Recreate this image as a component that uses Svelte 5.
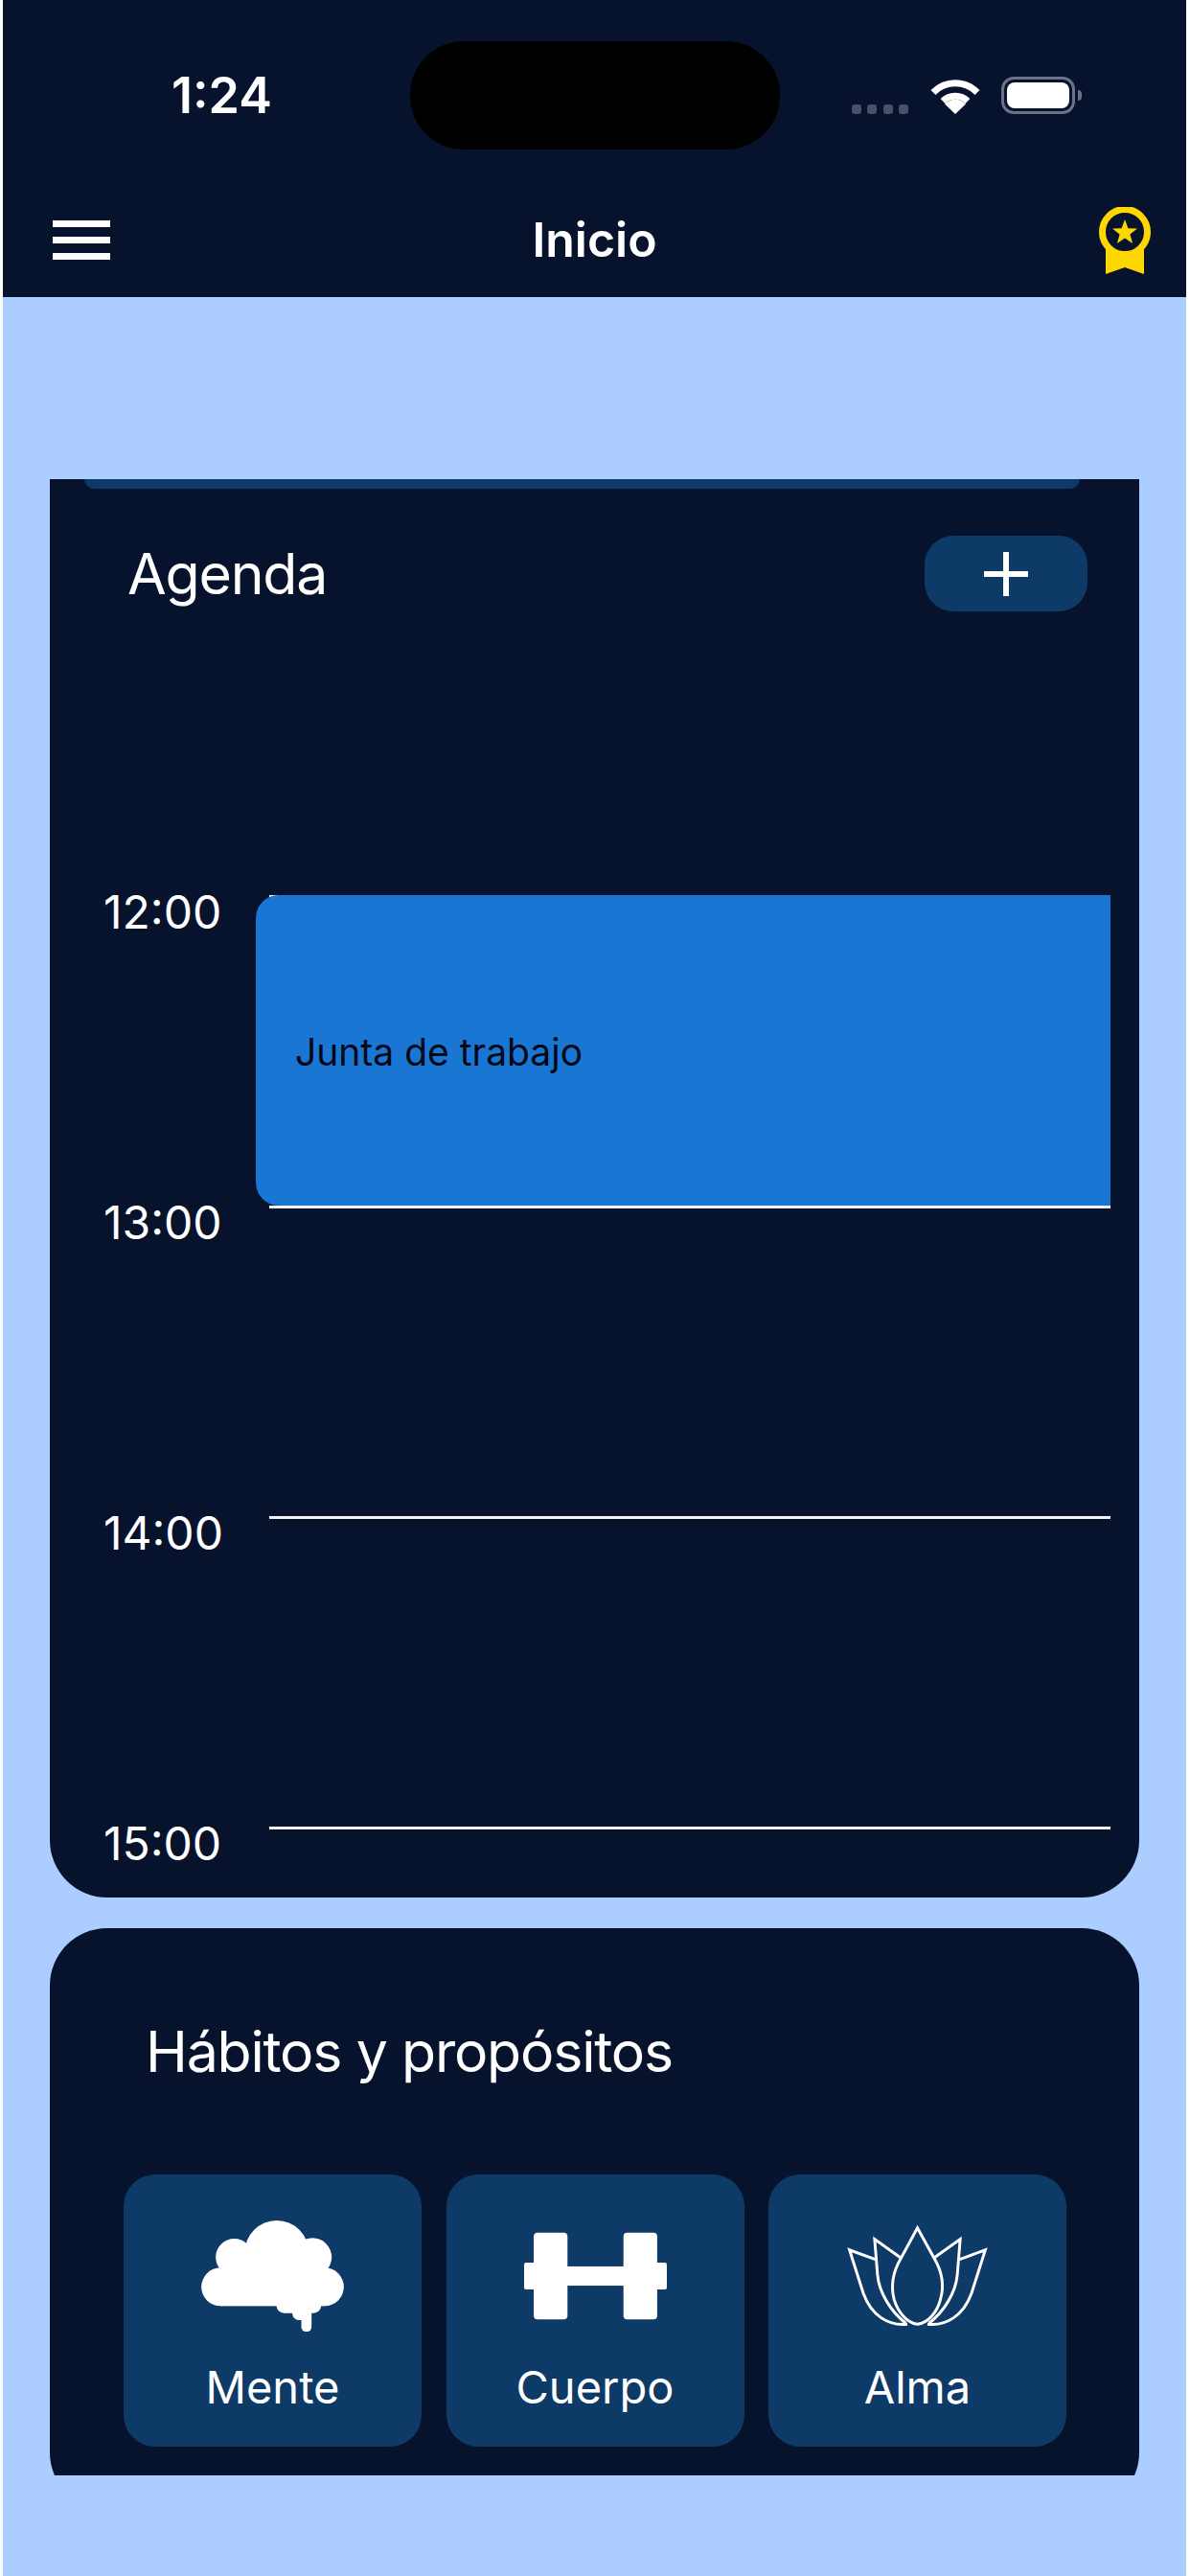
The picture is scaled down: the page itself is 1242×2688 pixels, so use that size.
<script>
  const hours = ["12:00", "13:00", "14:00", "15:00"];
  const habits = ["Mente", "Cuerpo", "Alma"];
</script>

<div class="screen">
  <header class="top">
    <div class="status">
      <span class="clock">1:24</span>
      <div class="island"></div>
      <div class="status-icons">
        <div class="dots"><i></i><i></i><i></i><i></i></div>
        <svg class="wifi" viewBox="0 0 52 39" aria-hidden="true">
          <path d="M3 16.5a32 32 0 0 1 46 0" />
          <path d="M13 25.5a19 19 0 0 1 26 0" />
          <path class="solid" d="M26 39l-11-10.5a15 15 0 0 1 22 0z" />
        </svg>
        <div class="battery"><div class="charge"></div></div>
      </div>
    </div>
    <div class="nav">
      <div class="burger"><i></i><i></i><i></i></div>
      <h1>Inicio</h1>
      <svg class="medal" viewBox="0 0 54 70" aria-hidden="true">
        <path d="M7 40v30l20-7 20 7V40z" />
        <circle cx="27" cy="26" r="23.5" />
        <path class="star" d="M27 13l3.4 9.3 9.6.2-7.6 6 2.7 9.5-8.1-5.6-8.1 5.6 2.7-9.5-7.6-6 9.6-.2z" />
      </svg>
    </div>
  </header>

  <main class="scroller">
    <div class="prev-card"></div>

    <section class="card agenda">
      <div class="agenda-head">
        <h2>Agenda</h2>
        <button type="button" class="add" aria-label="Agregar">
          <svg viewBox="0 0 46 46" aria-hidden="true"><path d="M23 0v46M0 23h46" /></svg>
        </button>
      </div>

      <div class="timeline">
        {#each hours as hour}
          <div class="hour">
            <span class="time">{hour}</span>
            <div class="line"></div>
          </div>
        {/each}
        <div class="event">Junta de trabajo</div>
      </div>
    </section>

    <section class="card habits">
      <h2>Hábitos y propósitos</h2>
      <div class="tiles">
        {#each habits as habit}
          <div class="tile">
            {#if habit === "Mente"}
              <svg class="icon" viewBox="0 0 446 348" aria-hidden="true">
                <g fill="#fff">
                  <circle cx="236" cy="100" r="100" />
                  <circle cx="103" cy="115" r="58" />
                  <circle cx="348" cy="115" r="60" />
                  <circle cx="60" cy="208" r="60" />
                  <circle cx="386" cy="208" r="60" />
                  <rect x="60" y="110" width="326" height="158" />
                  <rect x="235" y="230" width="140" height="60" rx="24" />
                  <rect x="285" y="260" width="60" height="52" rx="20" />
                  <rect x="313" y="280" width="32" height="68" rx="14" />
                </g>
              </svg>
            {:else if habit === "Cuerpo"}
              <svg class="icon" viewBox="0 0 148 90" aria-hidden="true">
                <g fill="#fff">
                  <rect x="0" y="31" width="14" height="28" rx="2" />
                  <rect x="10" y="0" width="35" height="90" rx="4" />
                  <rect x="40" y="35" width="68" height="20" />
                  <rect x="103" y="0" width="35" height="90" rx="4" />
                  <rect x="134" y="31" width="14" height="28" rx="2" />
                </g>
              </svg>
            {:else}
              <svg class="icon lotus" viewBox="305 212 454 326" aria-hidden="true">
                <path d="M532 222L585 318C610 360 620 400 605 450C595 490 565 525 532 528C500 525 470 490 458 450C445 400 455 360 480 318Z" />
                <path d="M480 318L396 258L405 370C410 430 450 490 495 525" />
                <path d="M584 318L668 258L659 370C654 430 614 490 569 525" />
                <path d="M398 322L316 292L360 430C385 500 440 535 500 528" />
                <path d="M666 322L748 292L704 430C679 500 624 535 564 528" />
              </svg>
            {/if}
            <span class="label">{habit}</span>
          </div>
        {/each}
      </div>
    </section>
  </main>
</div>

<style>
  :global(body) {
    background: #fff;
  }

  .screen {
    width: 1235px;
    height: 2688px;
    margin-left: 3px;
    background: #abcdff;
    overflow: hidden;
    font-family: Inter, "Noto Sans", sans-serif;
    color: #fff;
  }

  .top {
    height: 310px;
    box-sizing: border-box;
    background: #07122c;
  }

  .status {
    display: flex;
    height: 156px;
    box-sizing: border-box;
    padding-top: 43px;
  }

  .clock {
    width: 425px;
    box-sizing: border-box;
    padding: 32px 0 0 176px;
    font-size: 52px;
    line-height: 50px;
    font-weight: 600;
  }

  .island {
    width: 386px;
    height: 113px;
    background: #000;
    border-radius: 56px;
  }

  .status-icons {
    display: flex;
    align-items: flex-end;
    height: 76px;
    padding-left: 75px;
  }

  .dots {
    display: flex;
    gap: 6.4px;
  }

  .dots i {
    width: 10px;
    height: 10px;
    border-radius: 3px;
    background: #4a5068;
  }

  .wifi {
    width: 52px;
    height: 39px;
    margin-left: 23px;
    fill: none;
    stroke: #fff;
    stroke-width: 7;
  }

  .wifi .solid {
    fill: #fff;
    stroke: none;
  }

  .battery {
    position: relative;
    width: 77px;
    height: 39px;
    box-sizing: border-box;
    margin-left: 22px;
    padding: 3px;
    border: 3px solid #6b7186;
    border-radius: 13px;
  }

  .battery::after {
    content: "";
    position: absolute;
    left: 77px;
    top: 11px;
    width: 4px;
    height: 11px;
    border-radius: 0 5px 5px 0;
    background: #6b7186;
  }

  .charge {
    height: 100%;
    border-radius: 8px;
    background: #fff;
  }

  .nav {
    display: grid;
    grid-template-columns: 1fr auto 1fr;
    align-items: center;
    height: 154px;
    box-sizing: border-box;
    padding: 36px 37px 0;
  }

  .burger {
    display: flex;
    flex-direction: column;
    gap: 10px;
    width: 60px;
    margin: 0 0 2px 15px;
  }

  .burger i {
    height: 7px;
    background: #fff;
  }

  h1 {
    margin: 0 0 2px;
    font-size: 50px;
    line-height: 62px;
    font-weight: 600;
  }

  .medal {
    justify-self: end;
    width: 54px;
    height: 70px;
    fill: #ffd700;
  }

  .medal circle {
    fill: #07122c;
    stroke: #ffd700;
    stroke-width: 7;
  }

  .scroller {
    height: 2083px;
    margin: 190px 49px 0;
    overflow: hidden;
  }

  .prev-card {
    height: 10px;
    background: #07122c;
  }

  .prev-card::before {
    content: "";
    display: block;
    height: 10px;
    margin: 0 62px 0 36px;
    background: #0d3a66;
    border-radius: 0 0 20px 20px;
  }

  .card {
    background: #07122c;
  }

  .agenda {
    height: 1470px;
    box-sizing: border-box;
    border-radius: 0 0 60px 60px;
    padding-top: 49px;
  }

  .agenda-head {
    display: flex;
    align-items: center;
    justify-content: space-between;
    height: 79px;
    padding: 0 54px 0 81px;
  }

  h2 {
    margin: 0;
    font-size: 59px;
    line-height: 70px;
    font-weight: 400;
    letter-spacing: -1.2px;
  }

  .add {
    display: flex;
    align-items: center;
    justify-content: center;
    width: 170px;
    height: 79px;
    padding: 0;
    border: none;
    border-radius: 30px;
    background: #0d3a66;
  }

  .add svg {
    width: 46px;
    height: 46px;
    fill: none;
    stroke: #fff;
    stroke-width: 6;
  }

  .timeline {
    position: relative;
    margin: 296px 30px 0 0;
  }

  .hour {
    display: flex;
    height: 324px;
    padding-left: 56px;
  }

  .time {
    width: 173px;
    margin-top: -11px;
    font-size: 48px;
    line-height: 58px;
  }

  .line {
    flex: 1;
    height: 3px;
    background: #f2f2f2;
  }

  .event {
    position: absolute;
    left: 215px;
    right: 0;
    top: 0;
    height: 324px;
    box-sizing: border-box;
    display: flex;
    align-items: center;
    padding: 2px 0 0 41px;
    border-radius: 24px 0 0 24px;
    background: #1976d2;
    color: #020817;
    font-size: 39px;
  }

  .habits {
    height: 607px;
    margin-top: 32px;
    box-sizing: border-box;
    padding-top: 94px;
    border-radius: 60px;
  }

  .habits h2 {
    padding-left: 100px;
  }

  .tiles {
    display: flex;
    gap: 25.5px;
    margin-top: 93px;
    padding-left: 77px;
  }

  .tile {
    display: flex;
    flex-direction: column;
    align-items: center;
    width: 311px;
    height: 284px;
    border-radius: 33px;
    background: #0d3a66;
  }

  .icon {
    width: 149px;
    height: 116px;
    margin-top: 48px;
  }

  .lotus {
    fill: none;
    stroke: #fff;
    stroke-width: 9;
  }

  .label {
    margin-top: 30px;
    font-size: 47px;
    line-height: 56px;
  }
</style>
